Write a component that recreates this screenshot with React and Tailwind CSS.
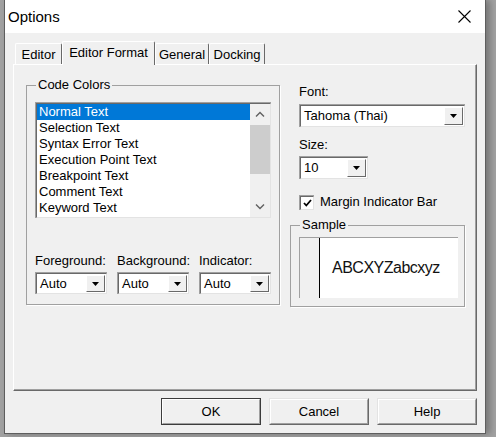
import { useState } from 'react'

const codeColors = [
  'Normal Text',
  'Selection Text',
  'Syntax Error Text',
  'Execution Point Text',
  'Breakpoint Text',
  'Comment Text',
  'Keyword Text',
]

const tabs = [
  { name: 'Editor', w: 'w-[47px]' },
  { name: 'Editor Format', w: 'w-[93px]' },
  { name: 'General', w: 'w-[54px]' },
  { name: 'Docking', w: 'w-[56px]' },
]

function DropArrow() {
  return (
    <svg width="7" height="4" viewBox="0 0 7 4">
      <polygon points="0,0 7,0 3.5,4" fill="#000" />
    </svg>
  )
}

// sunken 3d combo box with the little raised button on the right
function Combo({ value, className }) {
  return (
    <div className={`border-t border-l border-[#a0a0a0] border-b-white border-r-white ${className}`}>
      <div className="flex h-full border-t border-l border-[#696969] border-b border-r border-b-[#e3e3e3] border-r-[#e3e3e3] bg-white">
        <span className="flex-1 self-center pl-[3px] truncate">{value}</span>
        <div className="m-px w-[19px] border-t border-l border-white border-b border-r border-b-[#696969] border-r-[#696969] bg-[#f0f0f0] flex items-center justify-center">
          <DropArrow />
        </div>
      </div>
    </div>
  )
}

function Chevron({ up }) {
  return (
    <svg width="10" height="6" viewBox="0 0 10 6">
      <polyline
        points={up ? '1,5.5 5,1.5 9,5.5' : '1,0.5 5,4.5 9,0.5'}
        fill="none"
        stroke="#606060"
        strokeWidth="1.4"
      />
    </svg>
  )
}

function PushButton({ children, isDefault }) {
  return (
    <button
      type="button"
      className={`w-[100px] h-[27px] ${isDefault ? 'border border-[#3c3c3c]' : 'border border-t-[#e3e3e3] border-l-[#e3e3e3] border-b-[#696969] border-r-[#696969]'}`}
    >
      <div className="h-full border border-t-white border-l-white border-b-[#a0a0a0] border-r-[#a0a0a0] bg-[#f0f0f0] flex items-center justify-center">
        {children}
      </div>
    </button>
  )
}

export default function App() {
  const [selected, setSelected] = useState(0)
  const [activeTab, setActiveTab] = useState(1)
  const [margin, setMargin] = useState(true)

  return (
    <div className="w-[496px] h-[437px] bg-[#a2a2a2] pl-[4px] overflow-hidden font-['Liberation_Sans',Arial,sans-serif] text-[13px] leading-4 text-black">
      <div className="w-[482px] h-[434px] flex flex-col border-l border-r border-b border-[#5e5e5e] bg-[#f0f0f0] shadow-[4px_0_7px_rgba(0,0,0,0.28)]">
        {/* title bar */}
        <div className="h-[33px] bg-white flex items-center justify-between pl-[3px] pr-[14px]">
          <span className="text-[15px] leading-5">Options</span>
          <svg width="13" height="13" viewBox="0 0 13 13">
            <path d="M0.5 0.5 L12.5 12.5 M12.5 0.5 L0.5 12.5" stroke="#000" strokeWidth="1.1" />
          </svg>
        </div>

        <div className="flex flex-col pt-[8px] px-[8px]">
          {/* tab strip */}
          <div className="flex items-end h-[23px] pl-[2px]">
            {tabs.map((t, i) => (
              <div
                key={t.name}
                onClick={() => setActiveTab(i)}
                className={`${t.w} flex justify-center border-t border-l border-white border-r border-r-[#696969] rounded-t-[2px] ${
                  i === activeTab
                    ? 'h-[24px] -mb-px relative z-10 bg-[#f0f0f0] pt-[3px]'
                    : 'h-[21px] pt-[3px]'
                }`}
              >
                {t.name}
              </div>
            ))}
          </div>

          {/* tab page */}
          <div className="h-[327px] border-t border-l border-white border-b border-r border-b-[#696969] border-r-[#696969]">
            <div className="h-full flex border-b border-r border-b-[#a0a0a0] border-r-[#a0a0a0] pl-[12px] pt-[12px] gap-[10px]">
              <fieldset className="w-[254px] self-start border border-[#a0a0a0] shadow-[1px_1px_0_#fff]">
                <legend className="ml-[9px] px-[2px]">Code Colors</legend>
                <div className="pl-[8px] pt-[9px] pb-[10px]">
                  {/* list box */}
                  <div className="w-[236px] h-[116px] border-t border-l border-[#a0a0a0] border-b-white border-r-white">
                    <div className="h-full flex border-t border-l border-[#696969] border-b border-r border-b-[#e3e3e3] border-r-[#e3e3e3] bg-white">
                      <div className="flex-1 flex flex-col">
                        {codeColors.map((c, i) => (
                          <div
                            key={c}
                            onClick={() => setSelected(i)}
                            className={`h-4 pl-[2px] whitespace-nowrap ${i === selected ? 'bg-[#0078d7] text-white' : ''}`}
                          >
                            {c}
                          </div>
                        ))}
                      </div>
                      <div className="w-[20px] bg-[#f0f0f0] flex flex-col">
                        <div className="h-[20px] flex items-center justify-center">
                          <Chevron up />
                        </div>
                        <div className="mt-px h-[49px] bg-[#cdcdcd]" />
                        <div className="flex-1" />
                        <div className="h-[20px] flex items-center justify-center">
                          <Chevron />
                        </div>
                      </div>
                    </div>
                  </div>

                  <div className="mt-[35px] flex gap-[10px]">
                    {['Foreground:', 'Background:', 'Indicator:'].map((label) => (
                      <div key={label} className="w-[72px] flex flex-col gap-[3px]">
                        <span className="whitespace-nowrap">{label}</span>
                        <Combo value="Auto" className="h-[22px]" />
                      </div>
                    ))}
                  </div>
                </div>
              </fieldset>

              <div className="w-[175px] flex flex-col pt-[7px]">
                <div className="pl-[9px] flex flex-col">
                  <span>Font:</span>
                  <Combo value="Tahoma (Thai)" className="mt-[4px] w-[166px] h-[23px]" />
                  <span className="mt-[10px]">Size:</span>
                  <Combo value="10" className="mt-[3px] w-[69px] h-[23px]" />
                  <label className="mt-[15px] flex items-center gap-[6px] cursor-default">
                    <span
                      onClick={() => setMargin(!margin)}
                      className="w-[15px] h-[15px] border-t border-l border-[#a0a0a0] border-b-white border-r-white"
                    >
                      <span className="w-full h-full flex items-center justify-center border-t border-l border-[#696969] border-b border-r border-b-[#e3e3e3] border-r-[#e3e3e3] bg-white">
                        {margin && (
                          <svg width="9" height="8" viewBox="0 0 9 8">
                            <polyline points="1,4 3.3,6.5 8,1" fill="none" stroke="#000" strokeWidth="1.8" />
                          </svg>
                        )}
                      </span>
                    </span>
                    Margin Indicator Bar
                  </label>
                </div>

                <fieldset className="mt-[7px] border border-[#a0a0a0] shadow-[1px_1px_0_#fff]">
                  <legend className="ml-[9px] px-[2px]">Sample</legend>
                  <div className="pl-[8px] pr-[6px] pt-[4px] pb-[8px]">
                    <div className="h-[61px] flex border-t border-l border-[#a0a0a0] bg-white">
                      <div className="w-[20px] bg-[#f0f0f0] border-r border-black" />
                      <div className="flex-1 flex items-center pl-[12px] text-[16px] tracking-[-0.5px] text-[#111]">
                        ABCXYZabcxyz
                      </div>
                    </div>
                  </div>
                </fieldset>
              </div>
            </div>
          </div>

          {/* dialog buttons */}
          <div className="mt-[7px] flex justify-end gap-[8px]">
            <PushButton isDefault>OK</PushButton>
            <PushButton>Cancel</PushButton>
            <PushButton>Help</PushButton>
          </div>
        </div>
      </div>
    </div>
  )
}
